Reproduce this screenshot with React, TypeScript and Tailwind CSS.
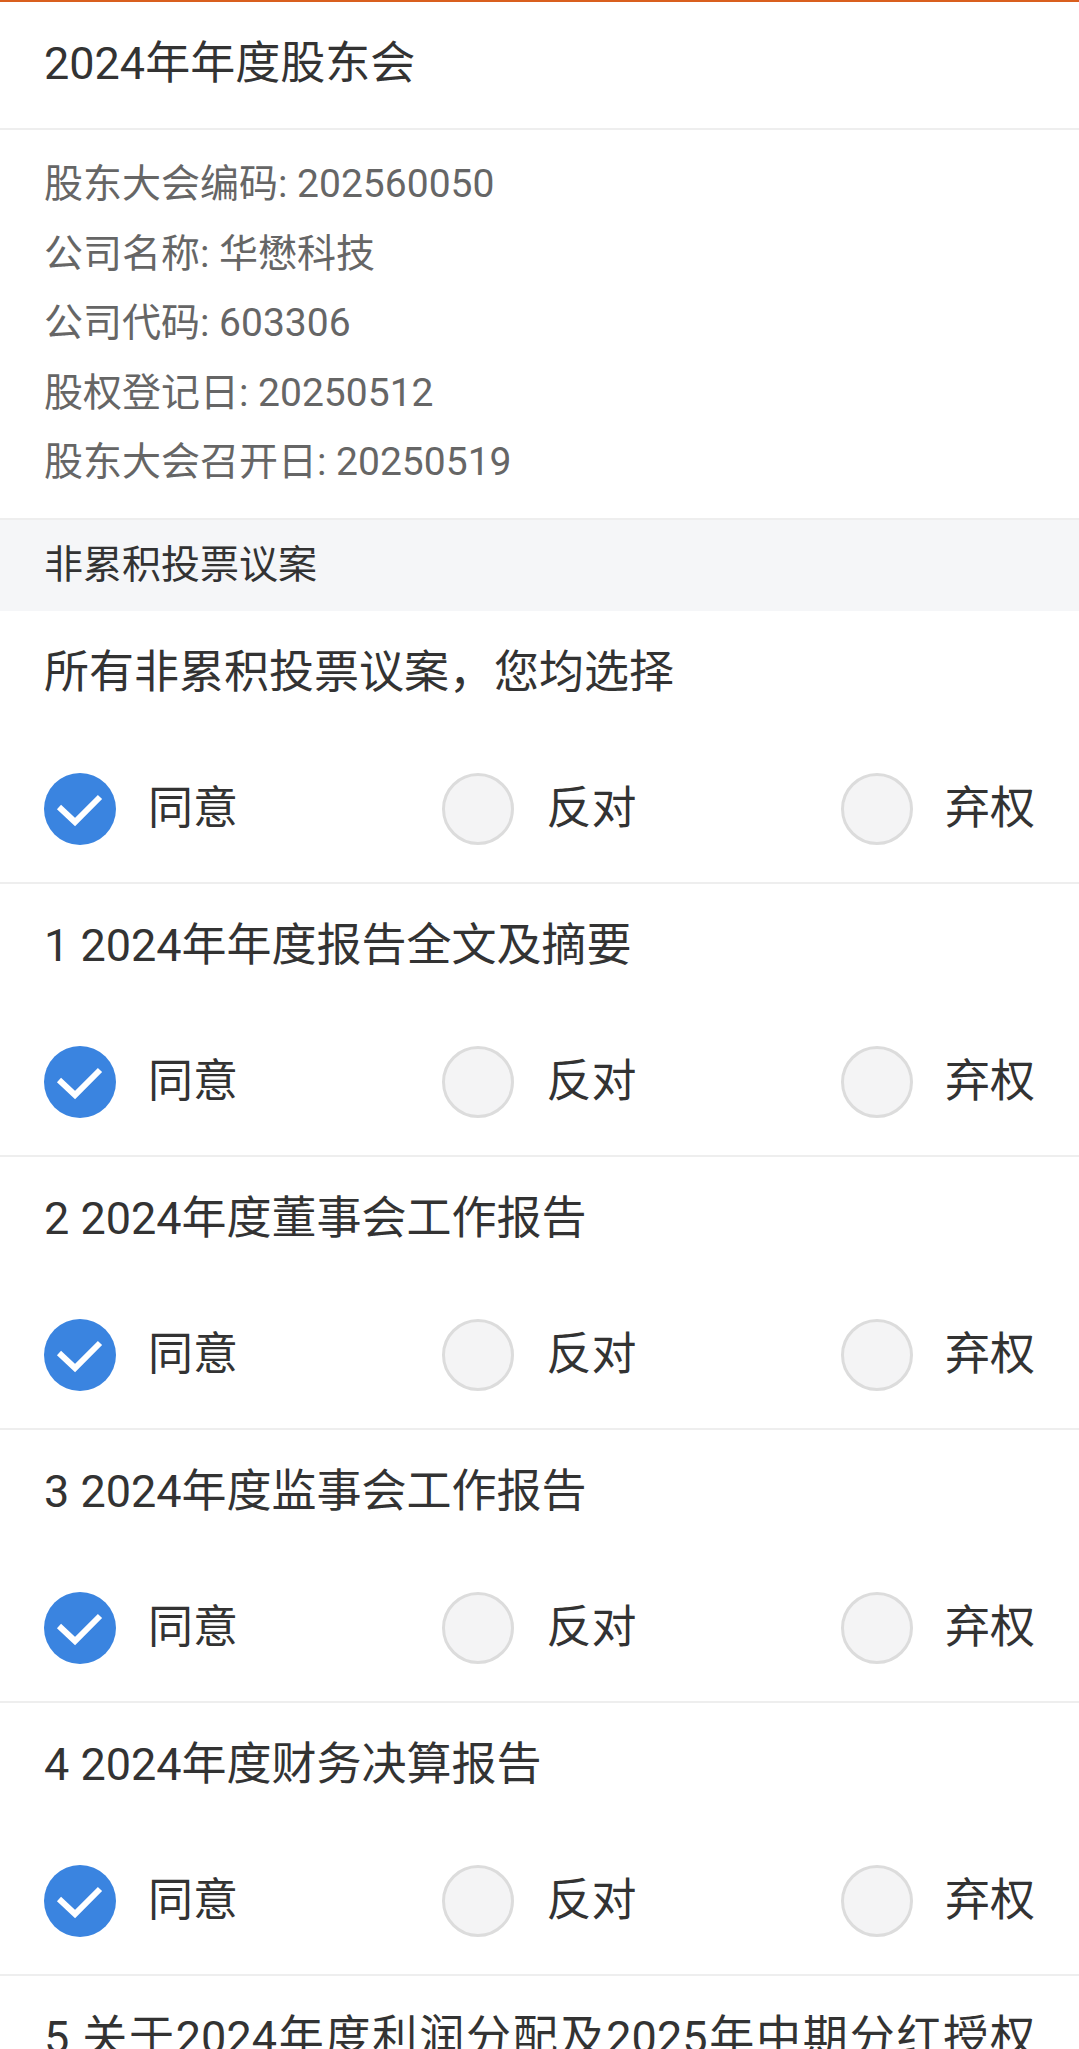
import React, { useState } from 'react';

type Choice = 'agree' | 'oppose' | 'abstain';

const proposals = [
  { id: 0, title: '所有非累积投票议案，您均选择' },
  { id: 1, title: '1 2024年年度报告全文及摘要' },
  { id: 2, title: '2 2024年度董事会工作报告' },
  { id: 3, title: '3 2024年度监事会工作报告' },
  { id: 4, title: '4 2024年度财务决算报告' },
  { id: 5, title: '5 关于2024年度利润分配及2025年中期分红授权的议案' },
];

const options: { key: Choice; label: string }[] = [
  { key: 'agree', label: '同意' },
  { key: 'oppose', label: '反对' },
  { key: 'abstain', label: '弃权' },
];

function Radio({ checked }: { checked: boolean }) {
  if (checked) {
    return (
      <div className="w-[72px] h-[72px] rounded-full bg-[#3a84e0] flex-none">
        <svg viewBox="0 0 72 72" className="w-full h-full">
          <polyline points="15,34 31,49 56,24" fill="none" stroke="#fff" strokeWidth="6" />
        </svg>
      </div>
    );
  }
  return <div className="w-[72px] h-[72px] rounded-full bg-[#f4f4f5] border-[3px] border-[#dcdcdc] flex-none" />;
}

export default function App() {
  const [votes, setVotes] = useState<Record<number, Choice>>(
    Object.fromEntries(proposals.map((p) => [p.id, 'agree'])) as Record<number, Choice>
  );

  const choose = (id: number, c: Choice) => {
    if (id === 0) {
      setVotes(Object.fromEntries(proposals.map((p) => [p.id, c])) as Record<number, Choice>);
    } else {
      setVotes((prev) => ({ ...prev, [id]: c }));
    }
  };

  return (
    <div className="min-h-screen bg-white text-[#333] font-['Roboto','Noto_Sans_CJK_SC',sans-serif]">
      <div className="h-[2px] bg-[#d95f1e]" />

      {/* Header */}
      <header className="h-[128px] pb-[3px] flex items-center px-[44px] text-[45px] border-b-2 border-[#eeeeee]">
        2024年年度股东会
      </header>

      {/* Meeting info */}
      <section className="px-[44px] py-[20px] text-[39px] leading-[69.5px] text-[#666] border-b-2 border-[#eeeeee]">
        <p>股东大会编码: 202560050</p>
        <p>公司名称: 华懋科技</p>
        <p>公司代码: 603306</p>
        <p>股权登记日: 20250512</p>
        <p>股东大会召开日: 20250519</p>
      </section>

      <div className="h-[91px] bg-[#f5f6f8] px-[44px] flex items-center text-[39px]">非累积投票议案</div>

      {/* Proposals */}
      {proposals.map((p) => (
        <div key={p.id} className="px-[44px] pt-[29px] pb-[37px] border-b-2 border-[#eeeeee]">
          <div className="text-[45px] leading-[66px] text-justify">{p.title}</div>
          <div className="mt-[67px] flex justify-between">
            {options.map((o) => (
              <button
                key={o.key}
                onClick={() => choose(p.id, o.key)}
                className="flex items-center gap-[32px] text-[45px] leading-none"
              >
                <Radio checked={votes[p.id] === o.key} />
                <span>{o.label}</span>
              </button>
            ))}
          </div>
        </div>
      ))}
    </div>
  );
}
